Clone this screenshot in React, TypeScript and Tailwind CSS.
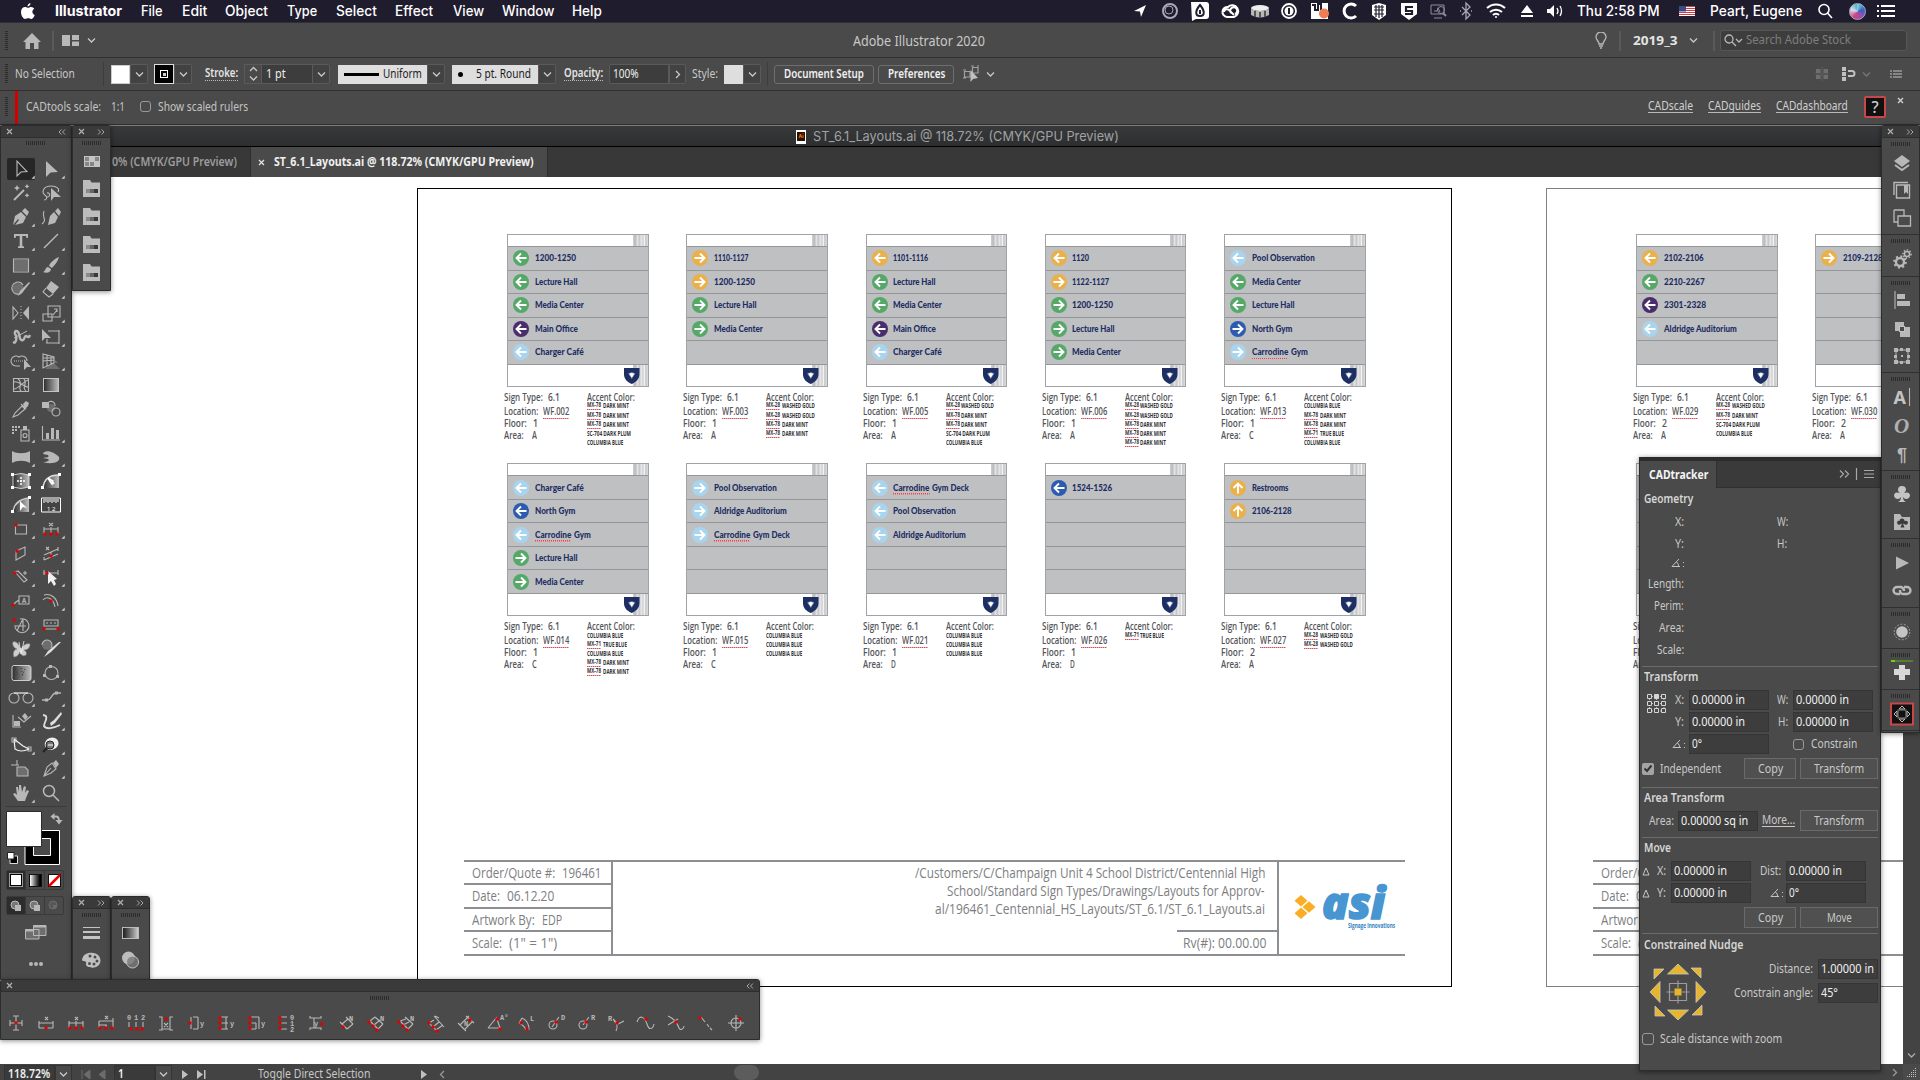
import { useLayoutEffect, useRef, useState, type ReactNode } from "react";

/* Text squeezed or stretched horizontally to an exact advance width. */
function Fit({ w, children, className = "" }: { w: number; children: ReactNode; className?: string }) {
  const ref = useRef<HTMLSpanElement>(null);
  const [scale, setScale] = useState(1);
  useLayoutEffect(() => {
    const natural = ref.current?.offsetWidth ?? w;
    setScale(w / natural);
  }, [w]);
  return (
    <span className={"block shrink-0 whitespace-nowrap " + className} style={{ width: w }}>
      <span ref={ref} className="inline-block origin-left" style={{ transform: `scaleX(${scale})` }}>
        {children}
      </span>
    </span>
  );
}

type Glyph = {
  f?: string;
  l?: string;
  w?: string;
  m?: string;
  r?: [number, number][];
  t?: [number, number, string][];
  s?: number;
  flat?: boolean;
  x?: ReactNode;
};

/* A drawing whose coordinates are centred on 0,0. */
function Draw({ g, w = 30, h = 24, corner = false }: { g: Glyph; w?: number; h?: number; corner?: boolean }) {
  return (
    <svg width={w} height={h} viewBox={`${-w / 2} ${-h / 2} ${w} ${h}`} className="block shrink-0 text-[#b8b8b8]">
      {g.m && <path d={g.m} fill="#6e6e6e" />}
      {g.f && <path d={g.f} fill="currentColor" />}
      {g.l && <path d={g.l} fill="none" stroke="currentColor" strokeWidth={g.s ?? 1.1} />}
      {g.w && <path d={g.w} fill="none" stroke="#f0f0f0" strokeWidth={1.2} />}
      {g.x}
      {g.t?.map(([x, y, s], i) => (
        <text key={i} x={x} y={y} fontSize="7" fontWeight="600" fill="currentColor" fontFamily="Liberation Mono, monospace">
          {s}
        </text>
      ))}
      {g.r?.map(([x, y], i) => (
        <rect key={i} x={x - 1.5} y={y - 1.5} width="3" height="3" fill="#e00000" />
      ))}
      {corner && <path d="M10.5 9.7L13.7 6.5V9.7Z" fill="#d0d0d0" />}
    </svg>
  );
}

const dk = "#2c2c2c";

const tools: Glyph[] = [
  { l: "M-4 -8V7L0 3L6 2.5Z", x: null },
  { f: "M-5 -8V8L-0.5 3.5L7 3Z" },
  { l: "M-7 7L3 -3", s: 2, f: "M-4 -8l1 2 2 1-2 1-1 2-1-2-2-1 2-1zM6 -9l.8 1.6 1.6.8-1.6.8-.8 1.6-.8-1.6-1.6-.8 1.6-.8zM6 0l.8 1.6 1.6.8-1.6.8-.8 1.6-.8-1.6-1.6-.8 1.6-.8z", flat: true },
  { l: "M-5 3C-11 -1 -7 -7 0 -7C6 -7 9 -4 7 -1M-5 3a2 2 0 1 0 1 -3M-5 3c2 2 0 4-2 4", f: "M0 -5V8L3 4L10 4Z", flat: true },
  { f: "M-8 8L-6 -1L0 -5L5 0L2 6L-6 8L-2 3L-3 2ZM1 -6L4 -9L8 -5L6 -1Z" },
  { f: "M-3 8L-1 -1L3 -5L7 0L4 6ZM4 -6L7 -9L10 -5L8 -1Z", l: "M-9 7C-3 2 -10 1 -7 -6", flat: true },
  { f: "M-7 -7H7V-3H5.5L5 -5H1.3V5L3 5.5V7H-3V5.5L-1.3 5V-5H-5L-5.500 -3H-7Z" },
  { l: "M-7 7L7 -7", s: 1.4 },
  { l: "M-7.500 -6H7.500V7H-7.500Z", m: "M-7 -5H7V6H-7Z" },
  { f: "M8 -8C3 -6 -1 -2 -2 1L1 3C4 0 7 -4 8 -8ZM-3 2C-6 2 -5 6 -8 7C-4 9 0 7 0 4Z" },
  { m: "M-9 0a6 6 0 1 1 12 0a6 6 0 1 1-12 0", l: "M2 -4A6 6 0 1 0 -2 5", f: "M9 -6L1 4L-3 7L-1 2L8 -7Z" },
  { f: "M0 -8L8 -2L2 5L-5 -1Z", l: "M-5 -1L-8 3L-2 8L2 5" },
  { l: "M-8 -6V6L-3 0ZM0 -7v1M0 -4v1M0 -1v1M0 2v1M0 5v1", f: "M8 -7V7L2 0Z" },
  { l: "M-3 -7H9V4H-3ZM-8 1H1V8H-8ZM2 2L6 -3M3 -4H6V-1" },
  { l: "M-8 5C-4 7 -4 -1 -6 -3C-7 -7 -3 -7 -2 -3C-1 1 -1 4 2 3C4 2 3 -1 5 -1C7 0 8 1 9 -2", s: 2.4, x: <path d="M-7 1L6 -6M-8 6h3" stroke="#b8b8b8" fill="none" /> },
  { f: "M-9 -8V4L-6 1L0 1Z", l: "M-2 -6H8V6H-4V2M-3 -6h2M8 -7v2M8 5v2M-5 6h2" },
  { l: "M-1 5H-5A5 5 0 1 1 -2 -4A5 5 0 0 1 6 0", f: "M3 -2V9L6 6L10 6Z", x: <path d="M-7 0H3" stroke="#b8b8b8" strokeDasharray="1 1" /> },
  { l: "M-8 -7V7L3 2V-4ZM-4 -6V5M0 -5V3M-8 0L3 -1M-8 -3L3 -3", m: "M2 1L9 8H-6ZM4 -1L7 2H4Z" },
  { l: "M-7.500 -6.500H7.500V6.500H-7.500ZM-7 4C-3 4 3 -4 7 -5M-3 -6C3 -2 -4 2 0 6M-7 -3C-3 -5 3 2 7 2M3 -6C7 -1 0 2 5 6", flat: true },
  { flat: true, x: <><rect x="-7.500" y="-6.500" width="15" height="13" fill="url(#grad)" stroke="#c4c4c4" /></> },
  { l: "M-8 8L-6 4L1 -3L4 0L-3 6ZM0 -5L5 0", f: "M2 -5L5 -8L8 -6L7 -3L4 0Z" },
  { f: "M-9 -7H-2V-1H-9Z", m: "M-4 -1a4 4 0 1 1 8 0a4 4 0 1 1-8 0", l: "M-3 -1a4 4 0 1 1 7-2M1 3a4 4 0 1 1 8 0a4 4 0 1 1-8 0", flat: true },
  { l: "M0 -3H8V8H0ZM2 2.500a2 2 0 1 1 4 0a2 2 0 1 1-4 0", f: "M2 -7H6V-3H2ZM-9 -7h2v2h-2zM-6 -7h2v2h-2zM-3 -7h2v2h-2zM-9 -4h2v2h-2zM-6 -4h2v2h-2zM-9 -1h2v2h-2z" },
  { l: "M-8.500 -7V7H9", f: "M-5 0h3v6h-3zM0 -5h3v11h-3zM5 -3h3v9h-3z" },
  { f: "M-9 -6C-4 -3 4 -3 9 -6V6C4 3 -4 3 -9 6Z" },
  { f: "M-8 -3C-7 -8 3 -6 8 0C10 5 1 8 -8 5C-3 5 -1 3 -3 2L-8 1C-5 0 -1 1 -3 -2Z" },
  { flat: true, x: <><path d="M-8 -6Q0 -9 8 -6V6Q0 9 -8 6Z" fill="url(#grad)" stroke="#ccc" /><path d="M-4 0H4M0 -4V4" stroke="#fff" strokeWidth="1.500" strokeDasharray="2 1" /><path d="M-10 -8h3v3h-3zM7 -8h3v3h-3zM-10 5h3v3h-3zM7 5h3v3h-3z" fill="#fff" /></> },
  { flat: true, x: <><path d="M-8 7C-7 -3 0 -6 8 -6V7Z" fill="url(#grad)" /><path d="M-8 7C-7 -3 0 -6 8 -6" stroke="#ddd" fill="none" strokeWidth="1.500" /><path d="M-3 -3L2 0L1 3L-3 -3L0 2M1 0L3 3" stroke="#fff" fill="none" strokeWidth="1.500" /><path d="M7 -8h3v3H7zM-10 5h3v3h-3z" fill="#fff" /></> },
  { x: <><path d="M-8 7C-7 -3 0 -6 8 -6V7Z" fill="url(#grad)" /><path d="M-8 7C-7 -3 0 -6 8 -7" stroke="#ccc" fill="none" strokeWidth="1.300" /><path d="M-1 -4V6L2 2L6 3Z" fill="#fff" /><path d="M7 -9h3v3H7zM-10 5h3v3h-3z" fill="#fff" /></> },
  { flat: true, x: <><path d="M-9.500 -7H9.500V7H-9.500Z" fill="#444" stroke="#fff" /><path d="M-7 -6v4M-5 -6v3M-3 -6v4M-1 -6v3M1 -6v4M3 -6v3M5 -6v4M7 -6v3" stroke="#fff" /><text x="-4" y="6" fontSize="6" fill="#fff">1 2</text></> },
  { l: "M-5.500 -4H5.500V5H-5.500Z", r: [[-5, -4]] },
  { l: "M-7 -2V5M7 -2V5M0 -2V5M-7 0H7M-2 -6L2 -3M2 -6L-2 -3", r: [[-6, 5], [0, 5], [6, 5]] },
  { l: "M-5 -2L4 -6V2L-5 7Z", r: [[-4, -2]] },
  { l: "M-7 2L7 -4M-7 7L7 1M-7 4v3M0 -1v4M7 -6v4M-5 -6l3 3M-2 -6l-3 3", r: [[0, 3]] },
  { l: "M-6 -5L3 5L6 3L-3 -6ZM2 -4H6M4 -6V-2", r: [[-6, -4]] },
  { l: "M-7 -4H7M-7 -7V-2M7 -7V-2", r: [[-4, -4]], x: <path d="M-3 -6V7L0 4L3 9L5 7L3 3L6 2Z" fill="#f0f0f0" /> },
  { l: "M-2 -5H8V3H-2ZM-2 -1L-5 1L-8 4", t: [[1, 2, "A"]], r: [[-8, 4]] },
  { l: "M-8 -1C-5 -5 2 -4 4 6M-7 -6C0 -8 6 -3 7 5", r: [[0, 0]] },
  { l: "M-6 0a7 7 0 1 0 5 -6M-4 6C-2 1 0 -2 2 -6V6M-5 1H5", r: [[-7, -5]] },
  { l: "M-7 -5H7V1H-7ZM-5 -2h2M-1 -2h2M3 -2h2M-7 4H7", r: [[-7, 4], [7, 4]] },
  { flat: true, x: <><path d="M-1 -1C-2 -5 -5 -8 -8 -7C-9 -4 -7 -1 -4 0C-8 1 -8 5 -7 8C-4 8 -2 5 -1 3C0 6 2 8 5 6C6 4 5 2 3 1C7 1 9 -2 9 -5C6 -6 2 -4 1 -1Z" fill="#cdcdcd" stroke="#8b8b8b" strokeWidth=".6" /><path d="M-2 -7L0 5M3 -8L0 5" stroke="#efefef" strokeWidth=".8" fill="none" /></> },
  { flat: true, l: "M-9 -4a5 5 0 1 1 9 3", m: "M-9 -4a5 5 0 1 1 10 0a5 5 0 1 1-10 0", x: <path d="M10 -7L0 3L-7 8L-3 2L8 -7Z" fill="#ddd" /> },
  { x: <><rect x="-9" y="-7.500" width="19" height="15" rx="2" fill="url(#grad)" stroke="#ccc" /><path d="M-6 -4l3 6M0 -5l2 8M4 -4l-3 7" stroke="#333" strokeDasharray="1 2" /></> },
  { l: "M-6 0a6.500 6.500 0 1 1 13 0a6.500 6.500 0 1 1-13 0", f: "M-2 -8h3v3h-3zM-8 1h3v3h-3zM5 2h3v3H5z" },
  { l: "M-12 1a5 5 0 1 1 10 0a5 5 0 1 1-10 0M2 1a5 5 0 1 1 10 0a5 5 0 1 1-10 0", w: "M-7 -4H7" },
  { l: "M-9 3H-5C1 4 0 -4 5 -4H10", f: "M-6 1.500h3v3h-3zM4 -5.500h3v3H4z", s: 1.4 },
  { l: "M-8 -6V6H0M-3 -4L3 1L10 -5", f: "M-7 0h6v5h-6zM4 -8L7 -4L4 -1L1 -5Z" },
  { x: <><path d="M10 -9L3 -1L-1 2L0 5L4 2L11 -7Z" fill="#ddd" /><path d="M-8 -6C-1 -5 -7 1 -7 5C-5 9 3 7 9 4" fill="none" stroke="#ddd" strokeWidth="1.800" /></> },
  { w: "M-7 -6L-6 4Q0 8 8 4L2 1L-7 -6", l: "M-9 -7h4v4h-4zM7 2h3v4H7z" },
  { x: <><ellipse cx="1" cy="-1" rx="7" ry="6" fill="#eee" transform="rotate(-20)" /><circle cx="-1" cy="0" r="4" fill="#777" stroke="#222" /><path d="M-4 3L-8 7" stroke="#222" strokeWidth="2" /><path d="M-3 0H2" stroke="#fff" /></> },
  { flat: true, m: "M-4 -2H4L7 1V7H-4Z", l: "M-4 -2H4L7 1V7H-4ZM-4 -9V-4M-10 -4H-2" },
  { l: "M-7 7L-4 -2L1 -6L5 0L0 4ZM-7 7L0 -1", f: "M2 -6L5 -9L8 -5L5 -1Z" },
  { f: "M-3 8L-8 1L-6 0L-4 2L-5 -6L-3 -6L-2 -1L-2 -8H0L1 -1L3 -7L5 -6L4 0L6 -3L8 -2L5 5L4 8Z" },
  { flat: true, l: "M-7.500 -2a5.500 5.500 0 1 1 11 0a5.500 5.500 0 1 1-11 0M2 2L8 8", s: 1.5 },
];

const dimensionTools: Glyph[] = [
  { l: "M0 -7V7M-6 0H6M-3 -7H3M-3 7H3M-6 -3V3M6 -3V3", r: [[0, 0]] },
  { l: "M-7 -2V5M7 -2V5M-7 0H7M-7 5H7M-1 -6l3 3M2 -6l-3 3", r: [[0, 5]] },
  { l: "M-7 -2V5M7 -2V5M0 -2V5M-7 0H7M-1 -6l3 3M2 -6l-3 3", r: [[-6, 5], [0, 5], [6, 5]] },
  { l: "M-7 -2V5M7 -5V5M0 2V5M-7 -2H7M-7 2H1M-1 -7l3 3M2 -7l-3 3", r: [[-6, 5], [0, 5], [6, 5]] },
  { l: "M-7 -1V4M0 -1V4M7 -1V4", t: [[-9, -3, "0"], [-2, -3, "1"], [5, -3, "2"]], r: [[-5, 6], [1, 6], [6, 6]] },
  { l: "M-7 -6h3V7h-3M7 -6H4V7h3M-4 6H4M-2 0l4 4M2 0l-4 4", r: [[0, -4]] },
  { l: "M-5 -6V6M2 -6V6M-3 -6h5M-3 6h5", t: [[4, 3, "y"]], r: [[-6, 0]] },
  { l: "M-5 -6H2M-5 0H2M-5 6H2M0 -6V6", t: [[4, 3, "y"]], r: [[-6, -5], [-6, 0], [-6, 5]] },
  { l: "M-5 -6H3M-5 0H0M-5 6H0M0 0V6M3 -6V6", t: [[5, 3, "y"]], r: [[-6, -5], [-6, 0], [-6, 5]] },
  { l: "M-5 -6H1M-5 0H1M-5 6H1", t: [[4, -3, "0"], [4, 3, "1"], [4, 9, "2"]], r: [[-6, -5], [-6, 0], [-6, 5]] },
  { l: "M-6 -7v2H5v-2M-6 7V5H5v2M-2 -5V5", t: [[-2, 3, "y"]], r: [[6, 1]] },
  { l: "M-6 -1L1 6M0 -6L7 1M-4 1L2 -4M1 6L7 1", t: [[3, -2, "N"]], r: [[-3, 4]] },
  { l: "M-6 -2L2 6M-1 -6L7 1M-6 -2L-1 -6M-2 2L4 -3M2 6L7 1", t: [[4, -2, "N"]], r: [[-7, -1], [-3, 3], [1, 7]] },
  { l: "M-6 -2L2 6M-1 -6L7 1M-6 -2L0 -4M-3 2L3 -1M2 6L7 1", t: [[4, -2, "N"]], r: [[-7, -1], [-3, 3], [1, 7]] },
  { l: "M-7 0L0 7M-2 -7L8 4M-7 0L-2 -3M-3 4L3 -1M0 7L7 2M-1 -7l4 2", r: [[-7, 0], [-3, 4], [1, 8]] },
  { l: "M-8 0L0 8M0 -7L8 0M-6 2L3 -7M-1 6L6 -1", t: [[-2, 3, "N"]], r: [[4, -3]] },
  { l: "M-8 5H5M-8 5L1 -6M1 -4L4 5", t: [[4, -3, "A°"]], r: [[1, -4], [4, 6]] },
  { l: "M-4 -5C1 -3 3 1 3 7M-7 0C-3 2 -1 4 0 7M-4 -5L-7 0", t: [[4, -2, "L"]], r: [[-5, 0], [1, 6]] },
  { l: "M-7 2a4 4 0 1 1 8 0a4 4 0 1 1-8 0M-4 4L3 -6", t: [[5, -3, "D"]], r: [[0, -1]] },
  { l: "M-7 2a4 4 0 1 1 8 0a4 4 0 1 1-8 0M-3 2L3 -6", t: [[5, -3, "R"]], r: [[0, -1]] },
  { l: "M-2 -2C1 0 2 4 0 8M-3 -4L2 1L8 -2", t: [[-8, -2, "R"]], r: [[1, 0]] },
  { l: "M-9 -1C-6 -10 -1 -5 1 1C3 8 7 6 8 1", r: [[0, -4]] },
  { l: "M-8 -7C-3 -5 1 -1 3 5C4 8 8 6 8 3M-8 2L2 -4", r: [[0, -1]] },
  { l: "M-5 -6L-1 -1M1 1L3 4M4 5L6 7", r: [[-6, -5]] },
  { l: "M-8 0H8M0 -8V8M-5 0a5 5 0 1 1 10 0a5 5 0 1 1-10 0", r: [[4, -4]] },
];

function Chevron({ dir = "down", className = "" }: { dir?: "down" | "right" | "left" | "up"; className?: string }) {
  const d = { down: "M1 2.500L4.500 6L8 2.500", up: "M1 6L4.500 2.500L8 6", right: "M3 1L6.500 4.500L3 8", left: "M6 1L2.500 4.500L6 8" }[dir];
  return (
    <svg width="9" height="9" viewBox="0 0 9 9" className={"block shrink-0 " + className}>
      <path d={d} fill="none" stroke="currentColor" strokeWidth="1.300" />
    </svg>
  );
}

function Grip({ className = "" }: { className?: string }) {
  return <div className={"h-[4px] w-[20px] shrink-0 bg-[repeating-linear-gradient(90deg,#2c2c2c_0_1px,#4a4a4a_1px_2px)] " + className} />;
}

function SideGrip({ className = "" }: { className?: string }) {
  return <div className={"ml-[5px] h-[20px] w-[3px] shrink-0 bg-[repeating-linear-gradient(180deg,#2c2c2c_0_1px,#4a4a4a_1px_2px)] " + className} />;
}

function PanelHead({ arrows }: { arrows: "left" | "right" }) {
  return (
    <div className="flex h-[12px] shrink-0 items-center justify-between rounded-t-[3px] border-b border-[#2e2e2e] bg-[#3a3a3a] px-[5px]">
      <svg width="7" height="7" viewBox="0 0 7 7"><path d="M1 1L6 6M6 1L1 6" stroke="#b0b0b0" strokeWidth="1.200" /></svg>
      <svg width="8" height="6" viewBox="0 0 8 6">
        <path d={arrows === "left" ? "M3.500 .5L1 3L3.500 5.500M7 .5L4.500 3L7 5.500" : "M1 .5L3.500 3L1 5.500M4.500 .5L7 3L4.500 5.500"} stroke="#a8a8a8" fill="none" />
      </svg>
    </div>
  );
}

/* ---------- menu bar ---------- */

function MenuBar() {
  return (
    <div className="flex h-[22px] shrink-0 items-center bg-[#1f1c2e] pl-[21px] font-['Inter',sans-serif] text-[14px] font-medium leading-none text-white">
      <svg width="14" height="17" viewBox="0 0 14 17" fill="#fff" className="shrink-0">
        <path d="M9.500 0C9.500 2 8 3.600 6.500 3.600C6.300 2 7.800 .2 9.500 0ZM10 4C11.500 4 12.600 4.800 13.200 5.700C10.500 7.300 11 11 13.700 12C13 14 11.700 16 10.200 16C9 16 8.600 15.300 7.200 15.300C5.800 15.300 5.300 16 4.200 16C2.500 16 0 12.800 0 9C0 5.800 2 4 4 4C5.300 4 6.400 4.800 7.200 4.800C7.900 4.800 9 4 10 4Z" />
      </svg>
      <Fit w={67} className="ml-[20px] font-bold">Illustrator</Fit>
      <Fit w={22} className="ml-[19px]">File</Fit>
      <Fit w={25} className="ml-[19px]">Edit</Fit>
      <Fit w={43} className="ml-[18px]">Object</Fit>
      <Fit w={30} className="ml-[19px]">Type</Fit>
      <Fit w={41} className="ml-[19px]">Select</Fit>
      <Fit w={38} className="ml-[18px]">Effect</Fit>
      <Fit w={31} className="ml-[20px]">View</Fit>
      <Fit w={52} className="ml-[18px]">Window</Fit>
      <Fit w={30} className="ml-[18px]">Help</Fit>
      <div className="ml-[527px] flex w-[436px] shrink-0 items-center justify-between">
        <Draw w={22} h={20} g={{ x: <path d="M6 -6L-6 0L0 .5L1 6Z" fill="#fff" /> }} />
        <Draw w={20} h={20} g={{ x: <><circle r="7" fill="none" stroke="#a9a8b4" strokeWidth="2" /><circle r="4" cx="-1" cy="-1" fill="none" stroke="#a9a8b4" /></> }} />
        <Draw w={20} h={20} g={{ x: <><path d="M-9 -9H6Q9 -9 9 -6V5Q9 8 6 8H-4L-8 10Z" fill="#fff" /><path d="M0 -6C5 0 5 5 0 5C-5 5 -5 0 0 -6ZM0 -1v4" fill="none" stroke="#1f1c2e" strokeWidth="2" /></> }} />
        <Draw w={22} h={20} g={{ x: <g fill="none" stroke="#fff" strokeWidth="2"><path d="M-3 6A5 5 0 1 1 -2 -4A6 6 0 1 1 4 6ZM-6 1a3 3 0 0 1 5-2L4 4M1 2a3.500 3.500 0 1 1 4 1" /></g> }} />
        <Draw w={20} h={20} g={{ x: <><ellipse cy="-3" rx="9" ry="3" fill="#eee" /><path d="M-9 -2V4Q0 9 9 4V-2Q0 2 -9 -2" fill="#b7b7b7" /><path d="M-5 0v6M0 1v6M5 0v6" stroke="#555" strokeWidth="2" /></> }} />
        <Draw w={20} h={20} g={{ x: <><circle r="7" fill="none" stroke="#fff" strokeWidth="1.800" /><circle r="4.500" fill="#fff" /><path d="M0 -3V3" stroke="#1f1c2e" strokeWidth="2" /></> }} />
        <Draw w={22} h={20} g={{ x: <><path d="M-9 -8H8V8H-9Z" fill="#fff" /><path d="M-8 -6h3v5h3v-6h3v6" fill="none" stroke="#1f1c2e" strokeWidth="2" /><circle cx="4" cy="2.500" r="5" fill="#ee7d55" /></> }} />
        <Draw w={20} h={20} g={{ x: <path d="M6 -5A7 7 0 1 0 6 5" fill="none" stroke="#fff" strokeWidth="3" /> }} />
        <Draw w={20} h={20} g={{ x: <><path d="M-7 -6L0 -8L7 -6V4L0 9L-7 4Z" fill="#fff" /><path d="M-5 -4H5M-5 -1H5M-5 3H5M-3 -6V6M0 -6V7M3 -6V6" stroke="#1f1c2e" strokeWidth="1.200" /></> }} />
        <Draw w={20} h={20} g={{ x: <><path d="M-8 -8H8V3L0 9L-8 3Z" fill="#fff" /><path d="M4 -4H-3V0H3V3H-4" stroke="#1f1c2e" fill="none" strokeWidth="2.200" /></> }} />
        <Draw w={20} h={20} g={{ x: <g fill="none" stroke="#8f8d9c"><path d="M-7 -6H6V3H-7ZM-4 7H4M-4 0h3l1-3 2 4" /><circle cx="3" cy="-1" r="3.500" /><path d="M5 2L8 5" strokeWidth="2" /></g> }} />
        <Draw w={18} h={20} g={{ x: <path d="M-4 -4L4 4L0 8V-8L4 -4L-4 4M-6 0h1M5 0h1" stroke="#a9a8b4" fill="none" strokeWidth="1.300" /> }} />
        <Draw w={24} h={20} g={{ x: <g fill="none" stroke="#fff" strokeWidth="2"><path d="M-9 -3A13 13 0 0 1 9 -3M-6 1A9 9 0 0 1 6 1M-3 4A4 4 0 0 1 3 4" /><circle cy="6" r="1" fill="#fff" strokeWidth="0" /></g> }} />
        <Draw w={18} h={20} g={{ x: <path d="M0 -6L6 2H-6ZM-6 4H6V6H-6Z" fill="#fff" /> }} />
        <Draw w={20} h={20} g={{ x: <><path d="M-8 -2H-5L-1 -6V6L-5 2H-8Z" fill="#fff" /><path d="M2 -3Q4 0 2 3M5 -5Q8 0 5 5" stroke="#fff" fill="none" strokeWidth="1.300" /></> }} />
      </div>
      <Fit w={83} className="ml-[12px] text-[14.500px]">Thu 2:58 PM</Fit>
      <svg width="16" height="10" viewBox="0 0 16 10" className="ml-[19px] shrink-0">
        <rect width="16" height="10" fill="#fff" />
        <path d="M0 .5H16M0 2.500H16M0 4.500H16M0 6.500H16M0 8.500H16" stroke="#c9404a" />
        <rect width="7" height="5.500" fill="#3b4a83" />
      </svg>
      <Fit w={92} className="ml-[15px] text-[14.500px]">Peart, Eugene</Fit>
      <div className="ml-[13px]"><Draw w={20} h={20} g={{ x: <g stroke="#fff" fill="none" strokeWidth="1.600"><circle cx="-1" cy="-1.500" r="5" /><path d="M2.500 2L7 7" /></g> }} /></div>
      <div className="ml-[14px] size-[17px] shrink-0 rounded-full border border-[#b4b8d2] bg-[conic-gradient(#8ce0ef,#3769d9,#b24fb9,#e24b8c,#f1f1ff,#3ec1d1)] opacity-90" />
      <svg width="18" height="12" viewBox="0 0 18 12" className="ml-[11px] shrink-0">
        <path d="M0 1H2M4 1H18M0 6H2M4 6H18M0 11H2M4 11H18" stroke="#fff" strokeWidth="2" />
      </svg>
    </div>
  );
}

/* ---------- application and control bars ---------- */

function AppBar() {
  return (
    <div className="flex h-[35px] shrink-0 items-center border-t border-[#303030] bg-[#4a4a4a] pt-[1px] text-[#c8c8c8]">
      <SideGrip />
      <svg width="18" height="16" viewBox="0 0 18 16" className="ml-[15px] shrink-0"><path d="M9 0L18 9H15.500V16H11V10H7V16H2.500V9H0Z" fill="#b8b8b8" /></svg>
      <div className="ml-[11px] h-[20px] w-[2px] shrink-0 bg-[#5a5a5a]" />
      <svg width="17" height="11" viewBox="0 0 17 11" className="ml-[8px] shrink-0"><path d="M0 0H8V11H0ZM10 0H17V5H10ZM10 6.500H17V11H10Z" fill="#b8b8b8" /></svg>
      <Chevron className="ml-[8px]" />
      <Fit w={132} className="ml-[757px] mt-[1px] text-[14px]">Adobe Illustrator 2020</Fit>
      <svg width="12" height="17" viewBox="0 0 12 17" className="ml-[610px] shrink-0"><path d="M4 12C4 9 1 8 1 5A5 5 0 0 1 11 5C11 8 8 9 8 12ZM4 14H8M5 16H7" fill="none" stroke="#b8b8b8" strokeWidth="1.300" /></svg>
      <div className="ml-[12px] h-[20px] w-[2px] shrink-0 bg-[#5a5a5a]" />
      <Fit w={45} className="ml-[12px] text-[13px] font-bold text-[#e4e4e4]">2019_3</Fit>
      <Chevron className="ml-[11px]" />
      <div className="ml-[15px] h-[20px] w-[2px] shrink-0 bg-[#5a5a5a]" />
      <div className="ml-[5px] flex h-[21px] w-[187px] shrink-0 items-center rounded-[3px] border border-[#565656] bg-[#3d3d3d] pl-[3px]">
        <svg width="20" height="13" viewBox="0 0 20 13" className="shrink-0"><g fill="none" stroke="#b8b8b8" strokeWidth="1.300"><circle cx="5" cy="5" r="4" /><path d="M8 8L12 12M12 5L15 8L18 5" /></g></svg>
        <Fit w={105} className="ml-[2px] text-[12.500px] text-[#7d7d7d]">Search Adobe Stock</Fit>
      </div>
    </div>
  );
}

const dropBox = "flex h-[20px] shrink-0 items-center justify-center rounded-r-[2px] border border-[#5a5a5a] bg-[#424242]";

function ControlBar() {
  return (
    <div className="flex h-[33px] shrink-0 items-center border-t border-[#303030] bg-[#4a4a4a] text-[12px] text-[#c8c8c8]">
      <SideGrip />
      <Fit w={60} className="ml-[7px]">No Selection</Fit>
      <div className="ml-[28px] h-[24px] w-px shrink-0 bg-[#3d3d3d]" />
      <div className="ml-[7px] size-[19px] shrink-0 border border-[#ccc] bg-white" />
      <div className={dropBox + " w-[18px]"}><Chevron /></div>
      <div className="ml-[6px] flex size-[20px] shrink-0 items-center justify-center border border-[#ddd] bg-black"><div className="flex size-[8px] items-center justify-center border-[1.500px] border-white"><div className="size-[3px] bg-[#ccc]" /></div></div>
      <div className={dropBox + " w-[18px]"}><Chevron /></div>
      <Fit w={33} className="ml-[13px] border-b border-dotted border-[#bbb] pb-px font-semibold text-[#e4e4e4]">Stroke:</Fit>
      <div className="ml-[6px] flex h-[20px] w-[18px] shrink-0 flex-col items-center justify-center border border-[#5a5a5a]"><Chevron dir="up" /><Chevron /></div>
      <div className="flex h-[20px] w-[50px] shrink-0 items-center border-y border-[#5a5a5a] bg-[#3d3d3d] pl-[4px]"><Fit w={20} className="text-[#eee]">1 pt</Fit></div>
      <div className={dropBox + " w-[18px]"}><Chevron /></div>
      <div className="ml-[8px] flex h-[19px] w-[89px] shrink-0 items-center bg-[#dedede] pl-[6px]"><div className="h-[3px] w-[35px] bg-black" /><Fit w={39} className="ml-[4px] text-[#1c1c1c]">Uniform</Fit></div>
      <div className={dropBox + " w-[18px]"}><Chevron /></div>
      <div className="ml-[7px] flex h-[19px] w-[86px] shrink-0 items-center bg-[#dedede] pl-[6px]"><div className="size-[5px] rounded-full bg-black" /><Fit w={55} className="ml-[13px] text-[#1c1c1c]">5 pt. Round</Fit></div>
      <div className={dropBox + " w-[18px]"}><Chevron /></div>
      <Fit w={39} className="ml-[8px] border-b border-dotted border-[#bbb] pb-px font-semibold text-[#e4e4e4]">Opacity:</Fit>
      <div className="ml-[6px] flex h-[20px] w-[60px] shrink-0 items-center rounded-l-[2px] border border-[#5a5a5a] bg-[#3d3d3d] pl-[3px]"><Fit w={26} className="text-[#eee]">100%</Fit></div>
      <div className={dropBox + " w-[17px]"}><Chevron dir="right" /></div>
      <Fit w={26} className="ml-[6px]">Style:</Fit>
      <div className="ml-[6px] size-[19px] shrink-0 bg-[#dedede]" />
      <div className={dropBox + " w-[18px]"}><Chevron /></div>
      <div className="ml-[6px] h-[24px] w-px shrink-0 bg-[#3d3d3d]" />
      <div className="ml-[6px] flex h-[19px] w-[100px] shrink-0 items-center justify-center rounded-[3px] border border-[#6e6e6e]"><Fit w={80} className="font-semibold text-[#f0f0f0]">Document Setup</Fit></div>
      <div className="ml-[4px] flex h-[19px] w-[76px] shrink-0 items-center justify-center rounded-[3px] border border-[#6e6e6e]"><Fit w={57} className="font-semibold text-[#f0f0f0]">Preferences</Fit></div>
      <svg width="18" height="18" viewBox="0 0 18 18" className="ml-[9px] shrink-0"><path d="M1.500 6.500H7V12H1.500ZM9.500 2.500H15V8H9.500ZM0 5h3M0 13h3M8 1h3M14 1h2" fill="none" stroke="#a0a0a0" strokeWidth="1.200" /><path d="M7.500 5V17L10 14L15 13Z" fill="#c0c0c0" /></svg>
      <Chevron className="ml-[5px]" />
      <svg width="14" height="14" viewBox="0 0 14 14" className="ml-[820px] shrink-0"><path d="M1 2H5.500V6H1ZM8.500 2H13V6H8.500ZM1 8H5.500V12H1ZM8.500 8H13V12H8.500Z" fill="#6f6f6f" /><path d="M7 0V14M0 7H14" stroke="#5f5f5f" /></svg>
      <svg width="14" height="14" viewBox="0 0 14 14" className="ml-[13px] shrink-0"><path d="M0 0H4V4H0ZM0 5H4V9H0ZM0 10H4V14H0Z" fill="#c0c0c0" /><path d="M6 4H10A2.500 2.500 0 0 1 10 9H6" stroke="#c0c0c0" fill="none" strokeWidth="2" /></svg>
      <Chevron className="ml-[6px] text-[#777]" />
      <svg width="12" height="8" viewBox="0 0 12 8" className="ml-[19px] shrink-0"><path d="M0 1H2M3 1H12M0 4H2M3 4H12M0 7H2M3 7H12" stroke="#c0c0c0" strokeWidth="1.200" /></svg>
    </div>
  );
}

function CadBar() {
  const link = "text-[#d0d0d0] [&>span]:border-b [&>span]:border-[#b8b8b8]";
  return (
    <div className="flex h-[34px] shrink-0 items-center border-t border-[#303030] bg-[#4a4a4a] pb-[2px] text-[12px] text-[#c4c4c4]">
      <SideGrip />
      <div className="-mb-[2px] ml-[7px] h-[33px] w-[3px] shrink-0 bg-[#d40000]" />
      <Fit w={75} className="ml-[8px]">CADtools scale:</Fit>
      <Fit w={14} className="ml-[10px]">1:1</Fit>
      <div className="ml-[15px] size-[11px] shrink-0 rounded-[3px] border border-[#9a9a9a]" />
      <Fit w={90} className="ml-[7px]">Show scaled rulers</Fit>
      <Fit w={45} className={"ml-[1400px] " + link}>CADscale</Fit>
      <Fit w={53} className={"ml-[15px] " + link}>CADguides</Fit>
      <Fit w={72} className={"ml-[15px] " + link}>CADdashboard</Fit>
      <div className="ml-[16px] flex h-[22px] w-[22px] shrink-0 items-center justify-center rounded-[2px] border-2 border-[#c8474b] bg-[#111] text-[16px] font-medium text-[#ccc]">?</div>
      <svg width="7" height="7" viewBox="0 0 7 7" className="mb-[13px] ml-[11px] shrink-0"><path d="M1 1L6 6M6 1L1 6" stroke="#d0d0d0" strokeWidth="1.400" /></svg>
    </div>
  );
}

function DocBars() {
  return (
    <>
      <div className="flex h-[22px] shrink-0 items-center border-b border-t border-b-black border-t-[#7a7a7a] bg-linear-to-b from-[#38393b] to-[#2d2e30] pl-[796px] pt-px font-['Inter',sans-serif]">
        <div className="flex h-[14px] w-[10px] shrink-0 items-center justify-center bg-white"><div className="flex h-[9px] w-[8px] items-center justify-center bg-[#2a1200] text-[5px] font-bold leading-none text-[#ff7c00]">Ai</div></div>
        <Fit w={306} className="ml-[7px] text-[13.500px] text-[#a0a1a2]">ST_6.1_Layouts.ai @ 118.72% (CMYK/GPU Preview)</Fit>
      </div>
      <div className="flex h-[30px] shrink-0 bg-[#383838] text-[12px]">
        <div className="flex w-[251px] shrink-0 items-center border-r border-[#2e2e2e] pl-[112px]"><Fit w={125} className="font-semibold text-[#9c9c9c]">0% (CMYK/GPU Preview)</Fit></div>
        <div className="flex w-[297px] shrink-0 items-center border-r border-[#2e2e2e] bg-[#4a4a4a] pl-[7px]">
          <svg width="7" height="7" viewBox="0 0 7 7"><path d="M1 1L6 6M6 1L1 6" stroke="#e0e0e0" strokeWidth="1.300" /></svg>
          <Fit w={260} className="ml-[9px] font-bold text-[#f0f0f0]">ST_6.1_Layouts.ai @ 118.72% (CMYK/GPU Preview)</Fit>
        </div>
      </div>
    </>
  );
}

/* ---------- artwork ---------- */

const accents: Record<string, { fill: string; code: string; name: string; w: number }> = {
  gold: { fill: "#e9b04b", code: "MX-28", name: "WASHED GOLD", w: 33 },
  mint: { fill: "#55a868", code: "MX-78", name: "DARK MINT", w: 26 },
  plum: { fill: "#4a2d6b", code: "", name: "SC-704 DARK PLUM", w: 44 },
  sky: { fill: "#a9d4ee", code: "", name: "COLUMBIA BLUE", w: 36 },
  blue: { fill: "#2c5bb0", code: "MX-71", name: "TRUE BLUE", w: 24 },
};

const widths: Record<string, number> = {
  "1200-1250": 41, "Lecture Hall": 42, "Media Center": 49, "Main Office": 42.5, "Charger Café": 48.5, "1110-1127": 34.5,
  "1101-1116": 35, "1120": 17, "1122-1127": 37, "Pool Observation": 62.5, "North Gym": 40.5, "Carrodine": 36.5, "Gym": 17, "Gym Deck": 37,
  "Aldridge Auditorium": 73, "1524-1526": 40, "Restrooms": 36.5, "2106-2128": 39.5, "2102-2106": 39.5, "2210-2267": 40.5,
  "2301-2328": 42, "2109-2128": 39.5,
};

type Line = [dir: "l" | "r" | "u", color: string, text: string];
type Sign = { loc: string; floor: string; area: string; lines: Line[] };

const mainSigns: Sign[] = [
  { loc: "WF.002", floor: "1", area: "A", lines: [["l", "mint", "1200-1250"], ["l", "mint", "Lecture Hall"], ["l", "mint", "Media Center"], ["l", "plum", "Main Office"], ["l", "sky", "Charger Café"]] },
  { loc: "WF.003", floor: "1", area: "A", lines: [["r", "gold", "1110-1127"], ["r", "gold", "1200-1250"], ["r", "mint", "Lecture Hall"], ["r", "mint", "Media Center"]] },
  { loc: "WF.005", floor: "1", area: "A", lines: [["l", "gold", "1101-1116"], ["l", "mint", "Lecture Hall"], ["l", "mint", "Media Center"], ["l", "plum", "Main Office"], ["l", "sky", "Charger Café"]] },
  { loc: "WF.006", floor: "1", area: "A", lines: [["l", "gold", "1120"], ["r", "gold", "1122-1127"], ["r", "mint", "1200-1250"], ["r", "mint", "Lecture Hall"], ["r", "mint", "Media Center"]] },
  { loc: "WF.013", floor: "1", area: "C", lines: [["l", "sky", "Pool Observation"], ["l", "mint", "Media Center"], ["l", "mint", "Lecture Hall"], ["r", "blue", "North Gym"], ["r", "sky", "Carrodine|Gym"]] },
  { loc: "WF.014", floor: "1", area: "C", lines: [["l", "sky", "Charger Café"], ["l", "blue", "North Gym"], ["l", "sky", "Carrodine|Gym"], ["r", "mint", "Lecture Hall"], ["r", "mint", "Media Center"]] },
  { loc: "WF.015", floor: "1", area: "C", lines: [["r", "sky", "Pool Observation"], ["r", "sky", "Aldridge Auditorium"], ["r", "sky", "Carrodine|Gym Deck"]] },
  { loc: "WF.021", floor: "1", area: "D", lines: [["l", "sky", "Carrodine|Gym Deck"], ["l", "sky", "Pool Observation"], ["l", "sky", "Aldridge Auditorium"]] },
  { loc: "WF.026", floor: "1", area: "D", lines: [["l", "blue", "1524-1526"]] },
  { loc: "WF.027", floor: "2", area: "A", lines: [["u", "gold", "Restrooms"], ["u", "gold", "2106-2128"]] },
];

const sideSigns: Sign[] = [
  { loc: "WF.029", floor: "2", area: "A", lines: [["l", "gold", "2102-2106"], ["l", "mint", "2210-2267"], ["l", "plum", "2301-2328"], ["l", "sky", "Aldridge Auditorium"]] },
  { loc: "WF.030", floor: "2", area: "A", lines: [["r", "gold", "2109-2128"]] },
  { loc: "WF.031", floor: "2", area: "A", lines: [] },
];

const squiggle = "bg-[repeating-linear-gradient(90deg,#dc4a54_0_1px,#f0a8ac_1px_2px)] bg-[length:100%_1.500px] bg-bottom bg-no-repeat";
const silver = "bg-[linear-gradient(90deg,#cfd0d2_0,#b9babd_15%,#e2e2e4_30%,#c4c5c8_45%,#efeff0_55%,#c2c3c6_62%,#fff_66%,#c6c7ca_72%,#fff_78%,#c6c7ca_84%,#dcdcde_100%)]";

function SignCard({ sign, first }: { sign: Sign; first: boolean }) {
  return (
    <div>
      <div className="h-[153px] w-[141.500px] border border-[#a0a2a5] bg-white">
        <div className="flex h-[11px] justify-end"><div className={"h-full w-[15px] " + silver} /></div>
        {[0, 1, 2, 3, 4].map((i) => {
          const line = sign.lines[i];
          const words = line ? line[2].split("|") : [];
          return (
            <div key={i} className="flex h-[23.500px] items-center border-t border-[#949699] bg-[#bfc0c2] pl-[5px]">
              {line && (
                <>
                  <svg width="16" height="16" viewBox="-8 -8 16 16" className="shrink-0">
                    <circle r="8" fill={accents[line[1]].fill} />
                    <g transform={line[0] === "l" ? "rotate(180)" : line[0] === "u" ? "rotate(-90)" : undefined}>
                      <path d="M-5.500 0H4M0 -4.500L4.500 0L0 4.500" fill="none" stroke="#fff" strokeWidth="1.900" />
                    </g>
                  </svg>
                  <div className="ml-[5.500px] flex gap-[2.500px] font-['Lato',sans-serif] text-[9px] font-black leading-[10px] text-[#1d2e63]">
                    {words.map((wd) => (
                      <Fit key={wd} w={widths[wd]} className={wd === "Carrodine" ? "-mb-[2px] h-[12px] " + squiggle : ""}>{wd}</Fit>
                    ))}
                  </div>
                </>
              )}
            </div>
          );
        })}
        <div className="flex h-[22.500px] items-start justify-end border-t border-[#949699]">
          <svg width="16" height="17" viewBox="0 0 16 17" className="relative left-[7.500px] top-[3px] shrink-0">
            <path d="M0 0H15.500V6C15.500 11 12 14 7.800 16C3 14 0 11 0 6Z" fill="#1d2e63" />
            <path d="M4.500 5.500L7.800 4.500L11 5.500L7.800 10.500Z" fill="#fff" stroke="#5b6a95" strokeWidth=".6" />
          </svg>
          <div className={"h-full w-[15px] " + silver} />
        </div>
      </div>
      <div className="relative left-[-3px] flex pt-[4px] font-['Open_Sans',sans-serif] text-[10.500px] font-semibold leading-[12px] text-[#55565a]">
        <div className="w-[83px] shrink-0">
          <div className="flex h-[12px]"><Fit w={39}>Sign Type:</Fit><Fit w={12} className="ml-[5px]">6.1</Fit></div>
          <div className="mt-[2px] flex h-[12px]"><Fit w={34}>Location:</Fit><Fit w={26} className={"ml-[5px] h-[14px] " + squiggle}>{sign.loc}</Fit></div>
          <div className="flex h-[12px]"><Fit w={23}>Floor:</Fit><Fit w={5} className="ml-[6px]">{sign.floor}</Fit></div>
          <div className="flex h-[12px]"><Fit w={20}>Area:</Fit><Fit w={5} className="ml-[8px]">{sign.area}</Fit></div>
        </div>
        <div className="shrink-0">
          <Fit w={48} className="h-[12px]">Accent Color:</Fit>
          <div className={first ? "-mt-[2px]" : "-mt-[1px]"}>
            {sign.lines.map((line, i) => {
              const a = accents[line[1]];
              return (
                <div key={i} className={"flex h-[9px] items-center gap-[1.500px] text-[6.500px] font-bold leading-[8px] text-[#333438] " + (first && i === 0 ? "mb-[1px]" : "")}>
                  {a.code && <Fit w={14} className={"h-[9px] " + squiggle}>{a.code}</Fit>}
                  <Fit w={a.w}>{a.name}</Fit>
                </div>
              );
            })}
          </div>
        </div>
      </div>
    </div>
  );
}

function TitleBlock() {
  const rule = "border-[#8c8e91]";
  return (
    <div className={"ml-[46px] mt-[167px] flex h-[96px] w-[941px] border-y-2 font-['Open_Sans',sans-serif] text-[15px] leading-none text-[#7c7e81] " + rule}>
      <div className={"flex w-[149px] shrink-0 flex-col border-r-2 " + rule}>
        {([["Order/Quote #:", 83, "196461", 39], ["Date:", 28, "06.12.20", 47], ["Artwork By:", 63, "EDP", 20], ["Scale:", 30, '(1" = 1")', 48]] as [string, number, string, number][]).map(([k, kw, v, vw], i) => (
          <div key={k} className={"flex flex-1 items-center gap-[7px] pl-[8px] " + (i < 3 ? "border-b-2 " : "") + rule}>
            <Fit w={kw}>{k}</Fit><Fit w={vw}>{v}</Fit>
          </div>
        ))}
      </div>
      <div className="flex flex-1 flex-col items-end">
        <div className="flex h-[68px] flex-col items-end pr-[12px] pt-[1px] leading-[18px]">
          <Fit w={350}>/Customers/C/Champaign Unit 4 School District/Centennial High</Fit>
          <Fit w={318}>School/Standard Sign Types/Drawings/Layouts for Approv-</Fit>
          <Fit w={330}>al/196461_Centennial_HS_Layouts/ST_6.1/ST_6.1_Layouts.ai</Fit>
        </div>
        <div className={"flex w-[100px] flex-1 items-center border-t-2 pl-[6px] " + rule}><Fit w={83}>Rv(#): 00.00.00</Fit></div>
      </div>
      <div className={"flex w-[128px] shrink-0 border-l-2 pl-[15px] pt-[24px] " + rule}>
        <svg width="22" height="24" viewBox="0 0 22 24" className="mt-[9px] shrink-0"><path d="M7 0L13.500 5.700L7 11.400L.5 5.700ZM15 6.300L21.500 12L15 17.700L8.500 12ZM7 12.600L13.500 18.300L7 24L.5 18.300Z" fill="#f9ae25" /></svg>
        <div className="ml-[6px] flex flex-col">
          <Fit w={63} className="h-[36px] font-['Open_Sans',sans-serif] text-[44px] font-extrabold italic leading-[33px] text-[#4795d1] [-webkit-text-stroke:1.500px_#4795d1]">asi</Fit>
          <Fit w={47} className="ml-[26px] text-[7px] font-bold leading-[8px] text-[#2f7fc0]">Signage innovations</Fit>
        </div>
      </div>
    </div>
  );
}

function Artboard({ signs, cols, className }: { signs: Sign[]; cols: number; className: string }) {
  return (
    <div className={"absolute top-[11px] h-[799px] w-[1035px] border bg-white " + className}>
      <div className={"box-content grid h-[458.600px] auto-rows-[229.300px] pl-[89px] pt-[45px] " + (cols === 5 ? "grid-cols-[repeat(5,179.250px)]" : "grid-cols-[repeat(2,179.250px)]")}>
        {signs.map((s, i) => <SignCard key={s.loc} sign={s} first={i < cols} />)}
      </div>
      <TitleBlock />
    </div>
  );
}

/* ---------- floating panels ---------- */

const panel = "absolute flex flex-col rounded-t-[3px] border border-[#2c2c2c] bg-[#4a4a4a] shadow-[0_1px_5px_rgba(0,0,0,0.45)]";

function ToolPanel() {
  return (
    <div className={panel + " left-0 top-[125px] h-[855px] w-[72px]"}>
      <PanelHead arrows="left" />
      <Grip className="ml-[25px] mt-[3px]" />
      <div className="ml-[5px] mt-[12px] grid w-[60px] grid-cols-2">
        {tools.map((g, i) => (
          <div key={i} className="relative h-[24px] w-[30px]">
            {i === 0 && <div className="absolute left-px top-px h-[22px] w-[28px] rounded-[2px] bg-[#262626]" />}
            <div className="relative"><Draw g={g} corner={!g.flat} /></div>
          </div>
        ))}
      </div>
      <div className="mx-[5px] mt-[1px] h-px bg-[#3b3b3b]" />
      <div className="mt-[3px] flex h-[60px] pl-[5px]">
        <svg width="60" height="56" viewBox="6 811 60 56" className="shrink-0">
          <path d="M25 831.500H59.500V865.500H25Z" fill="#000" stroke="#fff" />
          <path d="M33.500 839.500H50.500V856.500H33.500Z" fill="#4a4a4a" stroke="#fff" />
          <path d="M6.500 812.500H41.500V847.500H6.500Z" fill="#fff" stroke="#2c2c2c" />
          <path d="M52 817.500H56Q59 817.500 59 822" fill="none" stroke="#b8b8b8" strokeWidth="1.800" />
          <path d="M50.500 817.500L54.500 814V821ZM59 825.500L55.500 821H62.500Z" fill="#b8b8b8" />
          <path d="M10 857H17.500V864.500H10Z" fill="#000" stroke="#ddd" />
          <path d="M7.500 853.500H14V860H7.500Z" fill="#fff" stroke="#222" />
        </svg>
      </div>
      <div className="ml-[5px] flex h-[20px] w-[58px] rounded-[2px] border border-[#3a3a3a]">
        <div className="flex flex-1 items-center justify-center bg-[#2c2c2c]"><div className="size-[12px] border border-black bg-white outline outline-1 outline-[#999]" /></div>
        <div className="flex flex-1 items-center justify-center border-x border-[#3a3a3a]"><div className="size-[13px] border border-[#111] bg-linear-to-r from-white to-black" /></div>
        <div className="flex flex-1 items-center justify-center"><svg width="13" height="13"><rect x=".5" y=".5" width="12" height="12" fill="#fff" stroke="#111" /><path d="M1 12L12 1" stroke="#f00000" strokeWidth="2.500" /></svg></div>
      </div>
      <div className="ml-[5px] mt-[6px] flex h-[19px] w-[58px] rounded-[2px] border border-[#3a3a3a]">
        {[0, 1, 2].map((i) => (
          <div key={i} className={"flex flex-1 items-center justify-center " + (i === 0 ? "bg-[#2c2c2c]" : i === 1 ? "border-x border-[#3a3a3a]" : "opacity-30")}>
            <svg width="12" height="12" viewBox="0 0 12 12"><circle cx="5" cy="5" r="4" fill="#777" stroke="#bbb" /><path d={i === 2 ? "M5 5V9A4 4 0 0 0 9 5Z" : "M5 5H11V11H5Z"} fill="#b8b8b8" /></svg>
          </div>
        ))}
      </div>
      <svg width="22" height="17" viewBox="0 0 22 17" className="ml-[24px] mt-[9px] shrink-0"><path d="M.5 5.500H14V15H.5ZM8.500 1.500H21V11.500H8.500Z" fill="#6e6e6e" stroke="#b8b8b8" /><path d="M8 2.500H21M0 6.500H8" stroke="#b8b8b8" strokeWidth="2" /></svg>
      <div className="ml-[28px] mt-[21px] flex gap-[1px]"><i className="size-[4px] rounded-full bg-[#b8b8b8]" /><i className="size-[4px] rounded-full bg-[#b8b8b8]" /><i className="size-[4px] rounded-full bg-[#b8b8b8]" /></div>
    </div>
  );
}

function FolderIcon() {
  return (
    <svg width="17" height="17" viewBox="0 0 17 17" className="shrink-0">
      <path d="M0 0H7L8.500 2.500H17V17H0Z" fill="#bcbcbc" />
      <path d="M3 9H7V13H3Z" fill="#8a8a8a" /><path d="M7 9H11V13H7Z" fill="#666" /><path d="M11 9H15V13H11Z" fill="#3a3a3a" />
    </svg>
  );
}

function SidePanels() {
  return (
    <>
      <div className={panel + " left-[72px] top-[125px] h-[166px] w-[39px] items-stretch"}>
        <PanelHead arrows="right" />
        <Grip className="mx-auto mt-[3px]" />
        <div className="mt-[11px] flex flex-col items-center gap-[11px]">
          <svg width="16" height="11" viewBox="0 0 16 11" className="mb-[2px]"><path d="M0 0H16V11H0Z" fill="#c4c4c4" /><path d="M1 1H5V5H1ZM11 1H15V5H11ZM1 6H5V10H1ZM6 6H10V10H6Z" fill="#868686" /></svg>
          <FolderIcon /><FolderIcon /><FolderIcon /><FolderIcon />
        </div>
      </div>
      <div className={panel + " left-[72px] top-[896px] h-[84px] w-[39px]"}>
        <PanelHead arrows="right" />
        <Grip className="mx-auto mt-[4px]" />
        <div className="flex flex-col items-center gap-[13px] pt-[10px]">
          <svg width="17" height="12" viewBox="0 0 17 12"><path d="M0 .5H17" stroke="#c4c4c4" /><path d="M0 5H17" stroke="#c4c4c4" strokeWidth="2" /><path d="M0 10.500H17" stroke="#c4c4c4" strokeWidth="3" /></svg>
          <svg width="19" height="16" viewBox="0 0 19 16"><path d="M1 5C3 0 13 -1 17 4C20 9 18 13 14 15C9 17 3 14 4 12C5 10 3 9 1 9C-.5 8.500 0 7 1 5Z" fill="#c0c0c0" /><g fill="#4a4a4a"><circle cx="8" cy="4" r="1.500" /><circle cx="13" cy="5" r="1.500" /><circle cx="15" cy="9" r="1.500" /><circle cx="12" cy="12" r="1.500" /><circle cx="7.500" cy="11.500" r="1.500" /></g></svg>
        </div>
      </div>
      <div className={panel + " left-[111px] top-[896px] h-[84px] w-[39px]"}>
        <PanelHead arrows="right" />
        <Grip className="mx-auto mt-[4px]" />
        <div className="flex flex-col items-center gap-[12px] pt-[10px]">
          <div className="h-[12px] w-[17px] border border-[#bbb] bg-linear-to-r from-[#222] to-[#ccc]" />
          <svg width="19" height="18" viewBox="0 0 19 18"><circle cx="7.500" cy="7" r="6.500" fill="#bcbcbc" /><circle cx="11.500" cy="11" r="6" fill="#777" fillOpacity=".8" stroke="#c4c4c4" /></svg>
        </div>
      </div>
      <div className={panel + " left-0 top-[979px] h-[61px] w-[760px]"}>
        <PanelHead arrows="left" />
        <Grip className="mx-auto mt-[4px]" />
        <div className="mt-[9px] flex h-[28px]">
          {dimensionTools.map((g, i) => <Draw key={i} g={g} w={30} h={28} />)}
        </div>
      </div>
    </>
  );
}

const dock: { h: number; icons: { g: Glyph; at: number }[] }[] = [
  { h: 97, icons: [
    { at: 25, g: { f: "M0 -8L8 -2L0 4L-8 -2Z", l: "M-7 2L0 7L7 2", s: 2 } },
    { at: 52, g: { l: "M-8 5V-7.500H6M-5.500 -5H7.500V8H-5.500Z", s: 1.4, f: "M2 -5H6V4L4 2L2 4Z" } },
    { at: 80, g: { l: "M-8 -8H2V-2M-8 -8V4H-4M-4 -2H8.500V8H-4Z", s: 1.3 } },
  ] },
  { h: 42, icons: [{ at: 24, g: { x: <g fill="none" stroke="#b8b8b8"><circle cx="-2" cy="3" r="4" strokeWidth="2.500" /><circle cx="-2" cy="3" r="5.800" strokeWidth="2" strokeDasharray="2 2.500" /><circle cx="5" cy="-5" r="2.500" strokeWidth="1.500" /><circle cx="5" cy="-5" r="4" strokeDasharray="1.500 1.500" strokeWidth="1.500" /></g> } }] },
  { h: 96, icons: [
    { at: 23, g: { l: "M-7 -9V9", f: "M-5 -6H3V-1H-5ZM-5 1H8V6H-5Z" } },
    { at: 52, g: { f: "M-7 -7H2V2H-7ZM-2 -2H8V8H-2Z", x: <rect x="-2.500" y="-2.500" width="5" height="5" fill="#4a4a4a" stroke="#c4c4c4" /> } },
    { at: 79, g: { l: "M-6 -6H6V6H-6Z", f: "M-8 -8h4v4h-4zM4 -8h4v4h-4zM-8 4h4v4h-4zM4 4h4v4h-4zM-2 -8h3v3h-3zM-2 5h3v3h-3zM-8 -1h3v3h-3zM5 -1h3v3h-3zM-1 -1h2v2h-2z", s: 1 } },
  ] },
  { h: 98, icons: [
    { at: 24, g: { l: "M7.500 -9V9", x: <text x="-8.500" y="6.500" fontSize="18" fontWeight="700" fill="#c4c4c4" fontFamily="Noto Sans, sans-serif">A</text> } },
    { at: 53, g: { x: <text x="-8" y="7" fontSize="21" fontStyle="italic" fontWeight="700" fill="#b0b0b0" fontFamily="Liberation Serif, serif">O</text> } },
    { at: 82, g: { x: <text x="-5" y="6" fontSize="18" fontWeight="700" fill="#b8b8b8" fontFamily="Liberation Sans, sans-serif">¶</text> } },
  ] },
  { h: 68, icons: [
    { at: 23, g: { x: <path d="M-4 -4a4 4 0 1 1 8 0q-1 3-2 3q6-2 6 3a3.800 3.800 0 0 1-7 1q0 4 3 5h-8q3-1 3-5a3.800 3.800 0 0 1-7-1q0-5 6-3q-2-1-2-3" fill="#c4c4c4" /> } },
    { at: 51, g: { f: "M-8 -8H-2L0 -5H8V8H-8Z", x: <path d="M-2.500 -1a2.500 2.500 0 1 1 5 0q3-1 3.500 1.500q-.5 3-3 2l-2 -1l1.500 4h-4l1.500-4l-2 1q-2.500 1-3-2q.5-2.500 2.500-1.500" fill="#3c3c3c" /> } },
  ] },
  { h: 69, icons: [
    { at: 24, g: { f: "M-6 -6.500L7 0L-6 6.500Z" } },
    { at: 52, g: { l: "M-2 3H-5A3 3 0 0 1 -5 -4H-1Q2 -3 2 0M2 -4H5A3 3 0 0 1 5 3H1Q-2 3 -2 -1", s: 2.4 } },
  ] },
  { h: 41, icons: [{ at: 24, g: { x: <><circle r="5.800" fill="#c4c4c4" /><circle r="7.800" fill="none" stroke="#a0a0a0" strokeDasharray="2 1.500" /></> } }] },
  { h: 41, icons: [{ at: 21, g: { x: <><path d="M-11 -9H11" stroke="#557f2d" strokeWidth="2" /><path d="M-11 -9H-7" stroke="#72d000" strokeWidth="2" /><path d="M-3 -5H3V-1H8V5H3V10H-3V5H-8V-1H-3Z" fill="#d8d8d8" /></> } }] },
  { h: 41, icons: [{ at: 24, g: { x: <><rect x="-11" y="-10.500" width="22" height="21" fill="#111" stroke="#c8474b" strokeWidth="2" /><path d="M-3 -5L0 -8L3 -5ZM-3 5L0 8L3 5ZM-5 -3L-8 0L-5 3ZM5 -3L8 0L5 3Z" fill="none" stroke="#bbb" /><rect x="-4" y="-4" width="8" height="8" fill="none" stroke="#888" /></> } }] },
];

function RightDock() {
  return (
    <div className={panel + " left-[1881px] top-[125px] h-[608px] w-[39px]"}>
      <PanelHead arrows="right" />
      {dock.map((s, i) => (
        <div key={i} className="relative shrink-0 border-b border-[#303030]" style={{ height: s.h }}>
          <Grip className="absolute left-[9px] top-[4px]" />
          {s.icons.map((ic, k) => (
            <div key={k} className="absolute left-[7px]" style={{ top: ic.at - 13 }}><Draw g={ic.g} w={26} h={26} /></div>
          ))}
        </div>
      ))}
    </div>
  );
}

function Field({ className, w, children }: { className: string; w: number; children: ReactNode }) {
  return (
    <div className={"flex h-[20px] shrink-0 items-center border border-[#353535] bg-[#3d3d3d] pl-[2px] text-[#f0f0f0] " + className}>
      <Fit w={w}>{children}</Fit>
    </div>
  );
}

function Btn({ className, w, children }: { className: string; w: number; children: ReactNode }) {
  return (
    <div className={"flex h-[21px] shrink-0 items-center justify-center border border-[#6a6a6a] bg-[#505050] " + className}>
      <Fit w={w}>{children}</Fit>
    </div>
  );
}

function Angle({ className = "" }: { className?: string }) {
  return (
    <svg width="14" height="9" viewBox="0 0 14 9" className={"shrink-0 " + className}>
      <path d="M8 0L1 7.500H9M5.500 3Q8 5 7.500 7.500" fill="none" stroke="#c4c4c4" /><path d="M12 3h1v1h-1zM12 7h1v1h-1z" fill="#c4c4c4" />
    </svg>
  );
}

function Delta() {
  return <svg width="8" height="9" viewBox="0 0 8 9" className="shrink-0"><path d="M4 1L7 8H1Z" fill="none" stroke="#c4c4c4" /></svg>;
}

function CadTracker() {
  const head = "ml-[4px] flex h-[18px] shrink-0 items-center text-[12px] font-semibold text-[#d6d6d6]";
  const rule = "ml-[2px] h-px w-[236px] shrink-0 bg-[#6c6c6c]";
  return (
    <div className="absolute left-[1639px] top-[457px] flex h-[614px] w-[242px] flex-col border-x border-b border-t-4 border-[#2c2c2c] bg-[#4a4a4a] text-[12px] leading-none text-[#c8c8c8] shadow-[0_1px_5px_rgba(0,0,0,0.5)]">
      <div className="flex h-[27px] shrink-0 border-b border-[#303030] bg-[#3a3a3a]">
        <div className="-mb-px flex w-[77px] items-center border-r border-[#303030] bg-[#4a4a4a] pl-[9px]"><Fit w={59} className="text-[12px] font-bold text-[#f4f4f4]">CADtracker</Fit></div>
        <svg width="40" height="14" viewBox="0 0 40 14" className="ml-[120px] mt-[6px]"><path d="M3 3.500L6.500 7L3 10.500M8 3.500L11.500 7L8 10.500M19.500 1V13M27 3.500H37M27 7H37M27 10.500H37" fill="none" stroke="#a8a8a8" strokeWidth="1.200" /></svg>
      </div>
      <div className={head + " mt-[2px]"}><Fit w={49}>Geometry</Fit></div>
      <div className="mt-[3px] flex h-[22px] items-center"><Fit w={9} className="ml-[35px]">X:</Fit><Fit w={11} className="ml-[93px]">W:</Fit></div>
      <div className="flex h-[21px] items-center"><Fit w={9} className="ml-[35px]">Y:</Fit><Fit w={10} className="ml-[93px]">H:</Fit></div>
      <div className="flex h-[19px] items-center"><Angle className="ml-[31px]" /></div>
      {([["Length:", 36], ["Perim:", 30], ["Area:", 25], ["Scale:", 27]] as [string, number][]).map(([t, w]) => (
        <div key={t} className="flex h-[22px] w-[44px] shrink-0 items-center justify-end"><Fit w={w}>{t}</Fit></div>
      ))}
      <div className={rule + " mt-[5px]"} />
      <div className={head + " mt-[1px]"}><Fit w={54}>Transform</Fit></div>
      <div className="mt-[4px] flex">
        <svg width="20" height="20" viewBox="0 0 20 20" className="ml-[7px] mt-[4px] shrink-0"><path d="M3 2.500H17M3 9.500H17M3 17H17M2.500 3V17M9.500 3V17M17 3V17" stroke="#b8b8b8" strokeDasharray="1 1" /><g fill="#4a4a4a" stroke="#d4d4d4"><path d="M.5 .5h4v4h-4zM.5 7.500h4v4h-4zM.5 14.500h4v4h-4zM7.500 7.500h4v4h-4zM7.500 14.500h4v4h-4zM14.500 .5h4v4h-4zM14.500 7.500h4v4h-4zM14.500 14.500h4v4h-4z" /><path d="M7.500 .5h4v4h-4z" fill="#d4d4d4" /></g></svg>
        <div className="ml-[8px] flex flex-col gap-[2px]">
          <div className="flex items-center"><Fit w={9}>X:</Fit><Field className="ml-[5px] w-[80px]" w={53}>0.00000 in</Field><Fit w={11} className="ml-[8px]">W:</Fit><Field className="ml-[5px] w-[80px]" w={53}>0.00000 in</Field></div>
          <div className="flex items-center"><Fit w={9}>Y:</Fit><Field className="ml-[5px] w-[80px]" w={53}>0.00000 in</Field><Fit w={10} className="ml-[9px]">H:</Fit><Field className="ml-[5px] w-[80px]" w={53}>0.00000 in</Field></div>
          <div className="flex items-center"><Angle className="-ml-[3px] mr-[-2px]" /><Field className="ml-[5px] w-[80px]" w={10}>0°</Field><div className="ml-[24px] size-[11px] rounded-[3px] border border-[#9a9a9a]" /><Fit w={46} className="ml-[7px]">Constrain</Fit></div>
        </div>
      </div>
      <div className="mt-[4px] flex items-center">
        <div className="ml-[2px] flex size-[12px] items-center justify-center rounded-[2px] bg-[#a4a4a4]"><svg width="10" height="9" viewBox="0 0 10 9"><path d="M1.500 4.500L4 7L8.500 1.500" fill="none" stroke="#333" strokeWidth="2" /></svg></div>
        <Fit w={61} className="ml-[6px]">Independent</Fit>
        <Btn className="ml-[23px] w-[52px]" w={25}>Copy</Btn><Btn className="ml-[4px] w-[78px]" w={50}>Transform</Btn>
      </div>
      <div className={rule + " mt-[8px]"} />
      <div className={head + " mt-[1px]"}><Fit w={81}>Area Transform</Fit></div>
      <div className="mt-[3px] flex items-center"><Fit w={25} className="ml-[9px]">Area:</Fit><Field className="ml-[4px] w-[80px]" w={67}>0.00000 sq in</Field><Fit w={33} className="ml-[4px] [&>span]:border-b [&>span]:border-[#c8c8c8]">More...</Fit><Btn className="ml-[5px] w-[78px]" w={50}>Transform</Btn></div>
      <div className={rule + " mt-[6px]"} />
      <div className={head + " mt-[1px]"}><Fit w={27}>Move</Fit></div>
      <div className="mt-[4px] flex flex-col gap-[2px]">
        <div className="flex items-center pl-[2px]"><Delta /><Fit w={9} className="ml-[7px]">X:</Fit><Field className="ml-[5px] w-[80px]" w={53}>0.00000 in</Field><Fit w={21} className="ml-[9px]">Dist:</Fit><Field className="ml-[5px] w-[80px]" w={53}>0.00000 in</Field></div>
        <div className="flex items-center pl-[2px]"><Delta /><Fit w={9} className="ml-[7px]">Y:</Fit><Field className="ml-[5px] w-[80px]" w={53}>0.00000 in</Field><Angle className="ml-[19px] mr-[-3px]" /><Field className="ml-[5px] w-[80px]" w={10}>0°</Field></div>
      </div>
      <div className="mt-[4px] flex"><Btn className="ml-[104px] w-[52px]" w={25}>Copy</Btn><Btn className="ml-[4px] w-[78px]" w={25}>Move</Btn></div>
      <div className={rule + " mt-[5px]"} />
      <div className={head + " mt-[2px]"}><Fit w={99}>Constrained Nudge</Fit></div>
      <div className="mt-[5px] flex">
        <svg width="58" height="58" viewBox="-29 -29 58 58" className="ml-[9px] mt-[4px] shrink-0">
          <g fill="#e6b52c" stroke="#c8c8c8" strokeWidth=".8">
            {[0, 90, 180, 270].map((r) => <path key={r} d="M0 -28L10.500 -18H-10.500ZM-24 -23H-14L-24 -13Z" transform={`rotate(${r})`} />)}
          </g>
          <path d="M-8.500 -8.500H8.500V8.500H-8.500ZM0 -11.500V-4M0 4V11.500M-11.500 0H-4M4 0H11.500" fill="none" stroke="#9c9c9c" strokeWidth="1.200" />
          <rect x="-3.500" y="-3.500" width="7" height="7" fill="#e6b52c" />
        </svg>
        <div className="ml-[27px] flex w-[144px] flex-col gap-[4px]">
          <div className="flex items-center justify-end"><Fit w={44}>Distance:</Fit><Field className="ml-[5px] w-[60px]" w={53}>1.00000 in</Field></div>
          <div className="flex items-center justify-end"><Fit w={79}>Constrain angle:</Fit><Field className="ml-[5px] w-[60px]" w={17}>45°</Field></div>
        </div>
      </div>
      <div className="mt-[12px] flex items-center"><div className="ml-[2px] size-[12px] rounded-[3px] border border-[#9a9a9a]" /><Fit w={122} className="ml-[6px]">Scale distance with zoom</Fit></div>
    </div>
  );
}

function StatusBar() {
  return (
    <div className="flex h-[16px] shrink-0 items-start overflow-hidden bg-[#434343] text-[12px] leading-none text-[#c8c8c8]">
      <div className="flex h-[20px] shrink-0 items-center">
        <div className="ml-[4px] flex h-[18px] w-[51px] items-center border border-[#343434] bg-[#3a3a3a] pl-[3px]"><Fit w={42} className="font-semibold text-[#f0f0f0]">118.72%</Fit></div>
        <div className="flex h-[18px] w-[17px] items-center justify-center border border-[#343434] bg-[#4a4a4a]"><Chevron /></div>
        <svg width="26" height="9" viewBox="0 0 26 9" className="ml-[9px]"><path d="M1 0V9M9 0V9L3 4.500Z M24 0V9L18 4.500Z" fill="#6c6c6c" stroke="#6c6c6c" /></svg>
        <div className="ml-[7px] flex h-[18px] w-[41px] items-center border border-[#343434] bg-[#3a3a3a] pl-[3px]"><Fit w={6} className="font-semibold text-[#f0f0f0]">1</Fit></div>
        <div className="flex h-[18px] w-[17px] items-center justify-center border border-[#343434] bg-[#4a4a4a]"><Chevron /></div>
        <svg width="26" height="9" viewBox="0 0 26 9" className="ml-[9px]"><path d="M1 0V9L7 4.500ZM16 0V9L22 4.500ZM23 0H24.500V9H23Z" fill="#c0c0c0" /></svg>
        <Fit w={112} className="ml-[51px]">Toggle Direct Selection</Fit>
        <svg width="7" height="9" viewBox="0 0 7 9" className="ml-[51px]"><path d="M0 0V9L6 4.500Z" fill="#c0c0c0" /></svg>
        <Chevron dir="left" className="ml-[10px] text-[#999]" />
      </div>
      <div className="ml-[287px] mt-[1px] h-[15px] w-[25px] shrink-0 rounded-[8px] bg-[#5c5c5c]" />
      <Chevron dir="right" className="ml-auto mr-[4px] mt-[4px] text-[#999]" />
      <svg width="17" height="16" viewBox="0 0 17 16" className="shrink-0 bg-[#4a4a4a]"><path d="M4 12.500h10M6 10.500h8M8 8.500h6M10 6.500h4M12 4.500h2" stroke="#c0c0c0" strokeDasharray="1 1" /></svg>
    </div>
  );
}

export default function App() {
  return (
    <div className="relative flex h-[1080px] w-[1920px] flex-col overflow-hidden bg-[#4a4a4a] font-['Noto_Sans',sans-serif] leading-none">
      <svg width="0" height="0" className="absolute">
        <defs><linearGradient id="grad"><stop offset="0" stopColor={dk} /><stop offset="1" stopColor="#bdbdbd" /></linearGradient></defs>
      </svg>
      <MenuBar />
      <AppBar />
      <ControlBar />
      <CadBar />
      <div className="h-px shrink-0 bg-[#303030]" />
      <DocBars />
      <div className="flex h-[887px] shrink-0">
        <div className="relative flex-1 overflow-hidden bg-white">
          <Artboard signs={mainSigns} cols={5} className="left-[417px] border-black" />
          <Artboard signs={sideSigns} cols={2} className="left-[1546px] border-[#808080]" />
        </div>
        <div className="flex w-[17px] shrink-0 items-end justify-center bg-[#434343] pb-[4px] text-[#aaa]"><Chevron /></div>
      </div>
      <StatusBar />
      <ToolPanel />
      <SidePanels />
      <CadTracker />
      <RightDock />
    </div>
  );
}
